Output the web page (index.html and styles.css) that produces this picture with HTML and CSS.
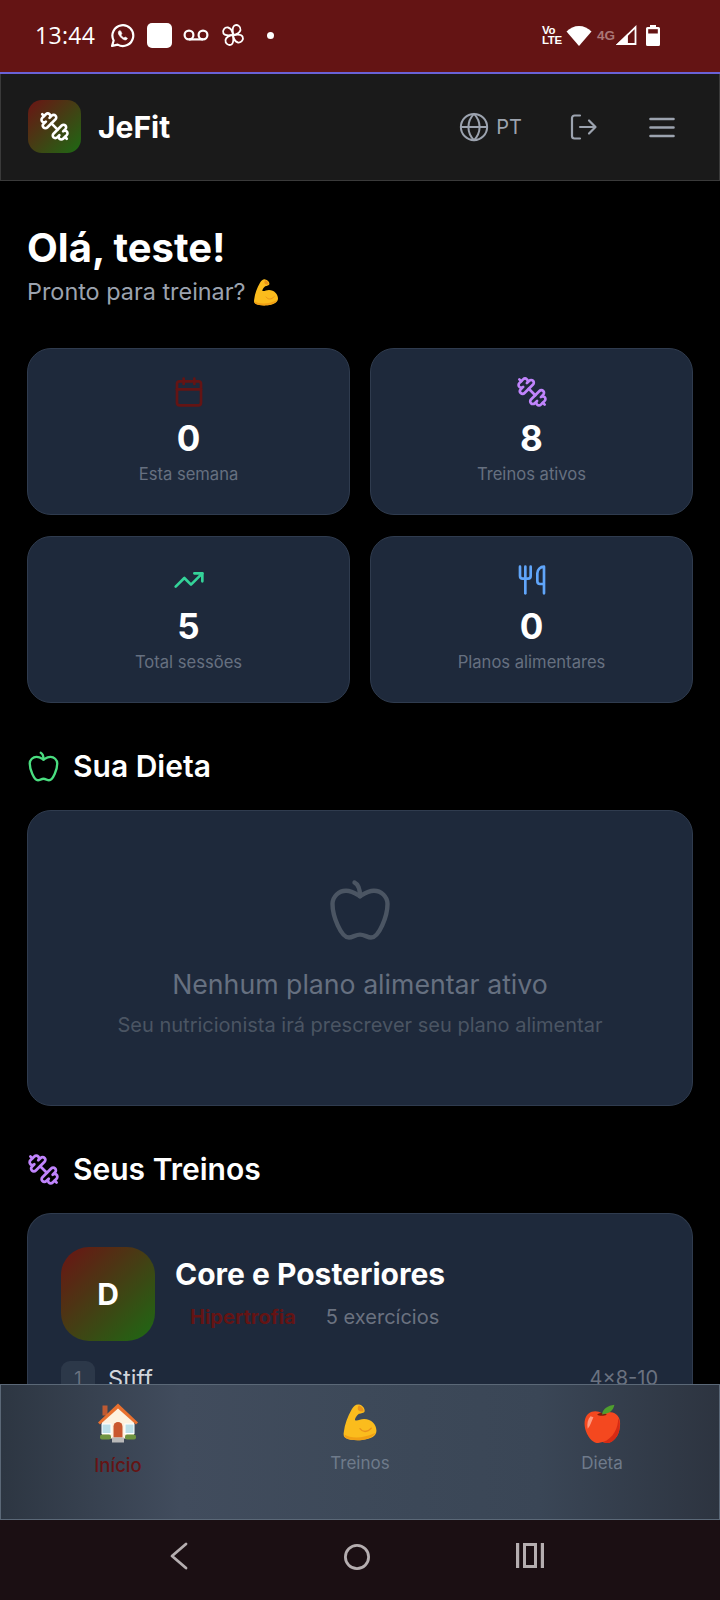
FILE: index.html
```html
<!DOCTYPE html>
<html lang="pt">
<head>
<meta charset="utf-8">
<title>JeFit</title>
<link rel="stylesheet" href="styles.css">
</head>
<body>
<svg class="defs" width="0" height="0" aria-hidden="true">
  <defs>
    <symbol id="dumbbell" viewBox="0 0 24 24" fill="none" stroke-linecap="round" stroke-linejoin="round">
      <path d="M14.4 14.4 9.6 9.6"/>
      <path d="M18.657 21.485a2 2 0 1 1-2.829-2.828l-1.767 1.768a2 2 0 1 1-2.829-2.829l6.364-6.364a2 2 0 1 1 2.829 2.829l-1.768 1.767a2 2 0 1 1 2.828 2.829z"/>
      <path d="m21.5 21.5-1.4-1.4"/>
      <path d="M3.9 3.9 2.5 2.5"/>
      <path d="M6.404 12.768a2 2 0 1 1-2.829-2.829l1.768-1.767a2 2 0 1 1-2.828-2.829l2.828-2.828a2 2 0 1 1 2.829 2.828l1.767-1.768a2 2 0 1 1 2.829 2.829z"/>
    </symbol>
    <symbol id="apple" viewBox="0 0 24 24" fill="none" stroke-linecap="round" stroke-linejoin="round">
      <path d="M12 20.94c1.5 0 2.75 1.06 4 1.06 3 0 6-8 6-12.22A4.91 4.91 0 0 0 17 5c-2.22 0-4 1.44-5 2-1-.56-2.78-2-5-2a4.9 4.9 0 0 0-5 4.78C2 14 5 22 8 22c1.25 0 2.5-1.06 4-1.06Z"/>
      <path d="M10 2c1 .5 2 2 2 5"/>
    </symbol>
    <symbol id="muscle-art" viewBox="0 0 32 36">
      <path d="M15 .5C18 1 21 4 20.500 7 20 9 17 9 15 9.500 13 11 11.500 13 11 15.500 13 17 16 14.500 20 14.500 27 14.500 32 20 32 26 32 31 27 34 18 35 12 35.500 5 35 2 33 0 32-.3 30 .3 27 1 20 4 12 8 5 10 2 12 0 15 .5z" fill="#fbbc1d"/>
      <path d="M15 1.500C17 2 19.500 4.500 19.500 7 17 7.500 15 7 14 5.500 13.500 4 14 2.500 15 1.500z" fill="#e9921a"/>
      <path d="M16 24c2.500 3.500 7 4 11-.5" fill="none" stroke="#e9921a" stroke-width="1.300" stroke-linecap="round"/>
      <path d="M1 30c6 3.500 18 4 30-2-2 4-7 6-13 7-6 .5-13 0-16-2-1-1-1-2-1-3z" fill="#f19f14"/>
    </symbol>
    <path id="blade" d="M12 12C12 8.500 10.500 4.500 13.500 2.500 16.500 1 20 3.500 19.500 7 18.800 10 15.500 11.500 12 12z"/>
  </defs>
</svg>

<div class="phone">
  <div class="statusbar">
    <div class="status-left">
      <span class="clock">13:44</span>
      <svg class="st-wa" viewBox="0 0 24 24" fill="none" stroke="#fff" stroke-width="2.100" stroke-linejoin="round" stroke-linecap="round">
        <path d="M2 22l1.500-5.200A10 10 0 1 1 7.400 20.800z"/>
        <path d="M8.600 7.600c-.9 1-.9 2.400.4 4.400s3.200 3.800 5.300 4.200c1.300.2 2.200-.5 2.400-1.600l-2.200-1.200-1 1c-1.300-.5-2.400-1.700-3-3l.9-1-1-2.500z" fill="#fff" stroke-width=".6"/>
      </svg>
      <span class="st-square"></span>
      <svg class="st-vm" viewBox="0 0 26 12" fill="none" stroke="#fff" stroke-width="2.200">
        <circle cx="6" cy="6" r="4.400"/>
        <circle cx="20" cy="6" r="4.400"/>
        <path d="M6 10.400h14"/>
      </svg>
      <svg class="st-fan" viewBox="0 0 24 24" fill="none" stroke="#fff" stroke-width="1.800" stroke-linejoin="round">
        <use href="#blade"/>
        <use href="#blade" transform="rotate(90 12 12)"/>
        <use href="#blade" transform="rotate(180 12 12)"/>
        <use href="#blade" transform="rotate(270 12 12)"/>
      </svg>
      <span class="st-dot"></span>
    </div>
    <div class="status-right">
      <span class="st-volte">Vo<br>LTE</span>
      <svg class="st-wifi" viewBox="0 0 26 21"><path d="M13 21 .5 6.500C4 3 8.300 1 13 1s9 2 12.500 5.500z" fill="#fff"/></svg>
      <span class="st-4g">4G</span>
      <svg class="st-signal" viewBox="0 0 21 20" fill="none" stroke="#fff" stroke-width="1.800" stroke-linejoin="miter"><path d="M19.500 2.200V19H2.200z"/><path d="M2.200 19h8.800v-8.400z" fill="#fff"/></svg>
      <svg class="st-batt" viewBox="0 0 14 21"><path d="M4 0h6v2h2.500A1.500 1.500 0 0 1 14 3.500V19.500A1.500 1.500 0 0 1 12.500 21H1.500A1.500 1.500 0 0 1 0 19.500V3.500A1.500 1.500 0 0 1 1.500 2H4z" fill="#fff"/><rect x="2.200" y="4.200" width="9.600" height="4.300" fill="#641414"/></svg>
    </div>
  </div>

  <header class="topbar">
    <div class="brand">
      <span class="brand-logo"><svg class="ic-logo"><use href="#dumbbell"/></svg></span>
      <span class="brand-name">JeFit</span>
    </div>
    <div class="top-actions">
      <div class="lang">
        <svg class="ic-globe" viewBox="0 0 24 24" fill="none" stroke="#9ca3af" stroke-width="1.600" stroke-linecap="round" stroke-linejoin="round">
          <circle cx="12" cy="12" r="10.500"/>
          <path d="M1.500 12h21"/>
          <path d="M12 1.500a15.300 15.300 0 0 1 4.500 10.500 15.300 15.300 0 0 1-4.500 10.500 15.300 15.300 0 0 1-4.500-10.500A15.300 15.300 0 0 1 12 1.500z"/>
        </svg>
        <span>PT</span>
      </div>
      <svg class="ic-logout" viewBox="0 0 28 26" fill="none" stroke="#9ca3af" stroke-width="2.200" stroke-linecap="round" stroke-linejoin="round">
        <path d="M10 1.500H4.500a2.500 2.500 0 0 0-2.500 2.500v18a2.500 2.500 0 0 0 2.500 2.500H10"/>
        <path d="M19 6.500l6.500 6.500-6.500 6.500"/>
        <path d="M25 13H10"/>
      </svg>
      <svg class="ic-menu" viewBox="0 0 26 21" fill="none" stroke="#9ca3af" stroke-width="2.600" stroke-linecap="round">
        <path d="M1.500 2h23M1.500 10.500h23M1.500 19h23"/>
      </svg>
    </div>
  </header>

  <main class="content">
    <h1 class="hello">Olá, teste!</h1>
    <p class="sub">Pronto para treinar?
      <svg class="ic-muscle-sm"><use href="#muscle-art"/></svg>
    </p>

    <section class="stats">
      <div class="stat">
        <svg class="stat-ic red" viewBox="0 0 24 24" fill="none" stroke-linecap="round" stroke-linejoin="round"><path d="M8 2v4"/><path d="M16 2v4"/><rect x="3" y="4" width="18" height="18" rx="2"/><path d="M3 10h18"/></svg>
        <div class="stat-val">0</div>
        <div class="stat-label">Esta semana</div>
      </div>
      <div class="stat">
        <svg class="stat-ic purple"><use href="#dumbbell"/></svg>
        <div class="stat-val">8</div>
        <div class="stat-label">Treinos ativos</div>
      </div>
      <div class="stat">
        <svg class="stat-ic green" viewBox="0 0 24 24" fill="none" stroke-linecap="round" stroke-linejoin="round"><path d="M22 7 13.500 15.500 8.500 10.500 2 17"/><path d="M16 7h6v6"/></svg>
        <div class="stat-val">5</div>
        <div class="stat-label">Total sessões</div>
      </div>
      <div class="stat">
        <svg class="stat-ic blue" viewBox="0 0 24 24" fill="none" stroke-linecap="round" stroke-linejoin="round"><path d="M3 2v7c0 1.100.9 2 2 2h4a2 2 0 0 0 2-2V2"/><path d="M7 2v20"/><path d="M21 15V2a5 5 0 0 0-5 5v6c0 1.100.9 2 2 2h3zm0 0v7"/></svg>
        <div class="stat-val">0</div>
        <div class="stat-label">Planos alimentares</div>
      </div>
    </section>

    <h2 class="section-title"><svg class="sec-ic apple-green"><use href="#apple"/></svg>Sua Dieta</h2>
    <section class="empty">
      <svg class="empty-ic"><use href="#apple"/></svg>
      <div class="empty-title">Nenhum plano alimentar ativo</div>
      <div class="empty-sub">Seu nutricionista irá prescrever seu plano alimentar</div>
    </section>

    <h2 class="section-title"><svg class="sec-ic purple"><use href="#dumbbell"/></svg>Seus Treinos</h2>
    <section class="workout">
      <div class="workout-head">
        <div class="tile">D</div>
        <div class="workout-info">
          <div class="workout-name">Core e Posteriores</div>
          <div class="workout-meta">
            <span class="tag">Hipertrofia</span>
            <span class="count">5 exercícios</span>
          </div>
        </div>
      </div>
      <div class="exercise">
        <span class="ex-num">1</span>
        <span class="ex-name">Stiff</span>
        <span class="ex-sets">4×8-10</span>
      </div>
    </section>
  </main>

  <nav class="bottomnav">
    <div class="nav-item">
      <svg class="emoji" viewBox="1 2 42 41">
        <rect x="6.500" y="5" width="5" height="10" fill="#bf5a32"/>
        <path d="M6 20 22 6l16 14v18H6z" fill="#fdf1df"/>
        <path d="M2 22 22 3l20 19-2 2L22 8 4 24z" fill="#e8702f"/>
        <rect x="6" y="23.500" width="9" height="9.500" fill="#bcdfe8" stroke="#fff" stroke-width="1"/>
        <rect x="29" y="23.500" width="9" height="9.500" fill="#bcdfe8" stroke="#fff" stroke-width="1"/>
        <path d="M17.500 37V26a4.500 4.500 0 0 1 9 0v11z" fill="#c9572f"/>
        <rect x="4" y="34" width="11" height="5" rx="2" fill="#6f9440"/>
        <rect x="29" y="34" width="11" height="5" rx="2" fill="#6f9440"/>
        <rect x="16" y="37" width="12" height="5" fill="#b9b9b9"/>
      </svg>
      <span class="nav-label active">Início</span>
    </div>
    <div class="nav-item">
      <span class="emoji-box"><svg class="emoji-muscle"><use href="#muscle-art"/></svg></span>
      <span class="nav-label">Treinos</span>
    </div>
    <div class="nav-item">
      <svg class="emoji" viewBox="0 -2 44 44">
        <path d="M22 10c-4-3-10-3-14 0C3 14 3 22 5 28c3 9 9 13 13 13 2 0 3-1 4.500-1s2.500 1 4.500 1c5 0 11-5 13-13 2-8 1-14-3-17-4-3-10-3-15-1z" fill="#f4481f"/>
        <path d="M27 41c5 0 11-5 13-13 1-5 1-10-1-13 0 10-5 21-16 25 1 0 2 1 4 1z" fill="#d62a14"/>
        <path d="M10 13c-3 3-4 8-3 13 3-3 4-8 6-12z" fill="#ff9a80"/>
        <path d="M17 11c2 2 7 2 10 0-3-2-7-2-10 0z" fill="#7a1e0c"/>
        <path d="M22 11c1-6 6-9 13-10-1 6-6 10-13 10z" fill="#4f9e2e"/>
      </svg>
      <span class="nav-label">Dieta</span>
    </div>
  </nav>

  <div class="android-nav">
    <svg class="an-back" viewBox="0 0 20 28" fill="none" stroke="#b5aeb0" stroke-width="2.800" stroke-linecap="round" stroke-linejoin="round"><path d="M17 2 3 14l14 12"/></svg>
    <svg class="an-home" viewBox="0 0 28 28" fill="none" stroke="#b5aeb0" stroke-width="2.800"><circle cx="14" cy="14" r="11.600"/></svg>
    <svg class="an-recent" viewBox="0 0 28 25" fill="#b5aeb0"><rect width="3.200" height="25"/><rect x="24.800" width="3.200" height="25"/><path d="M7 0h14v25H7zm3 3v19h8V3z" fill-rule="evenodd"/></svg>
  </div>
</div>
</body>
</html>
```
FILE: styles.css
```css
* { box-sizing: border-box; }
html, body { margin: 0; padding: 0; background: #000; }
body { font-family: Inter, "Noto Sans", sans-serif; color: #fff; }
.defs { position: absolute; }
.phone { width: 720px; height: 1600px; display: flex; flex-direction: column; overflow: hidden; background: #000; }

.statusbar { flex: 0 0 74px; background: #641414; border-bottom: 2px solid #6a62d6; display: flex; justify-content: space-between; align-items: center; padding: 0 60px 2px 35px; }
.status-left, .status-right { display: flex; align-items: center; }
.clock { font-family: "Open Sans", sans-serif; font-size: 23px; letter-spacing: .3px; margin-right: 15px; }
.st-wa { width: 25px; height: 25px; margin-right: 12px; }
.st-square { width: 25px; height: 25px; border-radius: 5px; background: #fff; margin-right: 11px; }
.st-vm { width: 26px; height: 12px; margin-right: 12px; }
.st-fan { width: 24px; height: 24px; margin-right: 22px; }
.st-dot { width: 7px; height: 7px; border-radius: 50%; background: #fff; }
.st-volte { font-family: "Liberation Sans", sans-serif; font-weight: 700; font-size: 11.500px; letter-spacing: -.3px; line-height: 10px; margin-right: 5px; width: 19px; }
.st-wifi { width: 26px; height: 21px; margin-right: 5px; }
.st-4g { font-family: "Liberation Sans", sans-serif; font-weight: 700; font-size: 13.500px; color: #a77; margin-right: 1px; }
.st-signal { width: 21px; height: 20px; margin-right: 9px; }
.st-batt { width: 14px; height: 21px; }

.topbar { flex: 0 0 107px; background: #1a1a1a; border: 1px solid #3a3a3a; border-top: 0; display: flex; justify-content: space-between; align-items: center; padding: 0 44px 0 27px; }
.brand { display: flex; align-items: center; gap: 17px; }
.brand-logo { width: 53px; height: 53px; margin-bottom: 2px; border-radius: 14px; background: linear-gradient(135deg, #6b1414, #1d6a14); display: flex; align-items: center; justify-content: center; }
.ic-logo { width: 31px; height: 31px; stroke: #fff; stroke-width: 2; }
.brand-name { font-size: 30px; font-weight: 700; }
.top-actions { display: flex; align-items: center; }
.lang { display: flex; align-items: center; gap: 7px; color: #9ca3af; font-size: 20px; margin-right: 48px; }
.ic-globe { width: 30px; height: 30px; }
.ic-logout { width: 28px; height: 26px; margin-right: 51px; }
.ic-menu { width: 26px; height: 21px; }

.content { flex: 1 1 0; min-height: 0; overflow: hidden; padding: 40px 27px 0; }
.hello { margin: 0; font-size: 40px; line-height: 54px; font-weight: 700; }
.sub { margin: 0; display: flex; align-items: center; gap: 8px; font-size: 23.400px; line-height: 34px; color: #9ca3af; }
.ic-muscle-sm { width: 24px; height: 27px; }

.stats { display: grid; grid-template-columns: 1fr 1fr; gap: 21px 20px; margin-top: 39px; }
.stat { height: 167px; background: #1e293b; border: 1px solid #2f3b4e; border-radius: 24px; display: flex; flex-direction: column; align-items: center; padding-top: 27px; }
.stat-ic { width: 32px; height: 32px; }
.red { stroke: #641414; stroke-width: 2; }
.purple { stroke: #c084fc; stroke-width: 2; }
.green { stroke: #34d399; stroke-width: 2; }
.blue { stroke: #60a5fa; stroke-width: 2; }
.stat-val { font-size: 35px; font-weight: 700; line-height: 42px; margin-top: 9px; }
.stat-label { font-size: 16.600px; line-height: 24px; color: #667080; margin-top: 3px; }

.section-title { margin: 41px 0 22px; display: flex; align-items: center; gap: 13px; font-size: 30px; line-height: 44px; font-weight: 600; }
.sec-ic { width: 33px; height: 33px; }
.apple-green { stroke: #4ade80; stroke-width: 1.700; }

.empty { height: 296px; background: #1e293b; border: 1px solid #2f3b4e; border-radius: 24px; display: flex; flex-direction: column; align-items: center; padding-top: 66px; margin-bottom: 40px; }
.empty-ic { width: 66px; height: 66px; stroke: #4b5563; stroke-width: 1.600; }
.empty-title { font-size: 26.700px; line-height: 38px; color: #667080; margin-top: 22px; }
.empty-sub { font-size: 20px; line-height: 30px; color: #4b5563; margin-top: 7px; }

.workout { background: #1e293b; border: 1px solid #2f3b4e; border-bottom: 0; border-radius: 24px 24px 0 0; padding: 33px 34px 0 33px; height: 200px; }
.workout-head { display: flex; gap: 20px; }
.tile { width: 94px; height: 94px; border-radius: 28px; background: linear-gradient(135deg, #6b1414, #1d6a14); display: flex; align-items: center; justify-content: center; font-size: 30px; font-weight: 700; }
.workout-info { padding-top: 8px; }
.workout-name { font-size: 30px; line-height: 38px; font-weight: 700; }
.workout-meta { display: flex; gap: 30px; font-size: 20px; line-height: 30px; margin-top: 9px; padding-left: 15px; }
.tag { color: #641414; font-weight: 700; }
.count { color: #6b7280; }
.exercise { display: flex; align-items: center; margin-top: 20px; }
.ex-num { width: 34px; height: 34px; border-radius: 9px; background: #2c3849; color: #6b7280; font-size: 18px; display: flex; align-items: center; justify-content: center; margin-right: 13px; }
.ex-name { font-size: 23.500px; color: #d1d5db; flex: 1; }
.ex-sets { font-size: 20px; color: #6b7280; }

.bottomnav { flex: 0 0 136px; display: flex; justify-content: center; gap: 42px; padding: 17px 0 0; background: linear-gradient(90deg, #2d3642 0%, #414c5d 25%, #3d4959 50%, #3a4656 75%, #2d3440 100%); border: 1px solid #5b6877; }
.nav-item { flex: 0 0 200px; display: flex; flex-direction: column; align-items: center; }
.emoji { width: 42px; height: 42px; }
.emoji-box { width: 42px; height: 42px; padding-bottom: 3px; display: flex; align-items: flex-end; justify-content: center; }
.emoji-muscle { width: 34px; height: 37px; }
.nav-label { font-size: 17px; line-height: 24px; color: #6f7b8b; margin-top: 7px; }
.nav-label.active { color: #641414; font-size: 18.500px; font-weight: 500; margin-top: 9px; }

.android-nav { flex: 0 0 80px; background: #1b0f13; display: flex; align-items: flex-start; padding: 23px 0 0 169px; }
.an-back { flex: none; width: 20px; height: 28px; margin-right: 154px; margin-top: -1px; }
.an-home { flex: none; width: 28px; height: 28px; margin-right: 145px; }
.an-recent { flex: none; width: 28px; height: 25px; }
```
